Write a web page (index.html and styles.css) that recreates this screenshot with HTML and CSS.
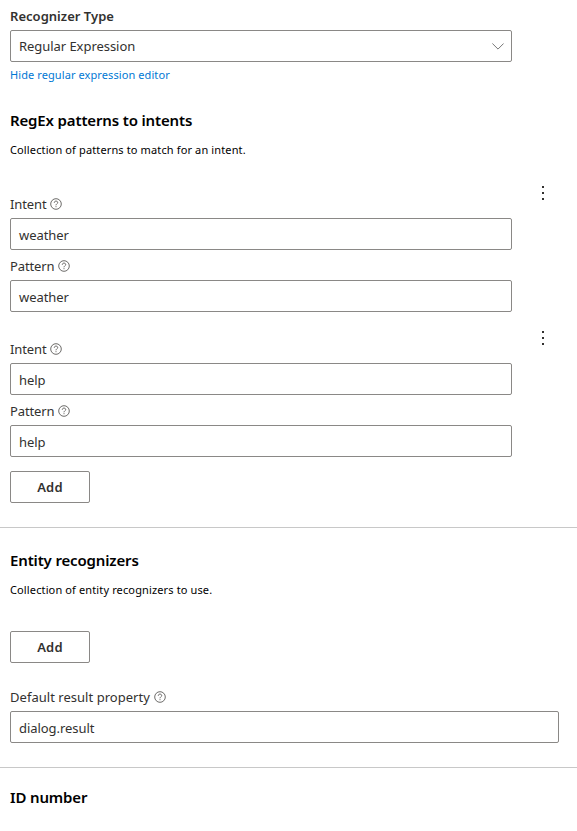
FILE: index.html
```html
<!DOCTYPE html>
<html lang="en">
<head>
<meta charset="utf-8">
<title>Recognizer properties</title>
<link rel="stylesheet" href="styles.css">
</head>
<body>
<svg class="defs" aria-hidden="true">
  <symbol id="help" viewBox="0 0 12 12"><circle cx="6" cy="6" r="5.3"/><path d="M4.3 4.8C4.3 3.7 5 3.1 6 3.1s1.7.6 1.7 1.5C7.7 5.8 6 5.9 6 7.3M6 8.2v1"/></symbol>
  <symbol id="more" viewBox="0 0 2 14"><path d="M0 0h2v2H0zM0 6h2v2H0zM0 12h2v2H0z"/></symbol>
</svg>
<section class="section recognizer">
  <div class="type-label">Recognizer Type</div>
  <div class="field select"><span>Regular Expression</span><svg class="chevron" viewBox="0 0 12 7"><path d="M.4.5 6 6.1 11.6.5"/></svg></div>
  <div class="link"><a>Hide regular expression editor</a></div>
  <h2>RegEx patterns to intents</h2>
  <p>Collection of patterns to match for an intent.</p>
  <div class="item">
    <div class="fields">
      <div class="label"><span>Intent</span><svg class="help"><use href="#help"/></svg></div>
      <div class="field">weather</div>
      <div class="label second"><span>Pattern</span><svg class="help"><use href="#help"/></svg></div>
      <div class="field">weather</div>
    </div>
    <svg class="more"><use href="#more"/></svg>
  </div>
  <div class="item">
    <div class="fields">
      <div class="label"><span>Intent</span><svg class="help"><use href="#help"/></svg></div>
      <div class="field">help</div>
      <div class="label second"><span>Pattern</span><svg class="help"><use href="#help"/></svg></div>
      <div class="field">help</div>
    </div>
    <svg class="more"><use href="#more"/></svg>
  </div>
  <button>Add</button>
</section>
<section class="section entities">
  <h2>Entity recognizers</h2>
  <p>Collection of entity recognizers to use.</p>
  <button>Add</button>
  <div class="label result"><span>Default result property</span><svg class="help"><use href="#help"/></svg></div>
  <div class="field wide">dialog.result</div>
</section>
<section class="section identity">
  <h2>ID number</h2>
</section>
</body>
</html>
```
FILE: styles.css
```css
* { box-sizing: border-box; }
body {
  margin: 0;
  height: 831px;
  overflow: hidden;
  background: #fff;
  color: #323130;
  font: 13px/20px "Noto Sans", "Open Sans", sans-serif;
}
.defs { display: none; }
.section { padding: 0 18px 24px 10px; white-space: nowrap; }
.section + .section { border-top: 1px solid #c8c8c8; padding-top: 20px; }
.section.identity { padding-top: 17px; }
.recognizer { padding-top: 6px; }
.type-label { height: 24px; font-weight: 600; letter-spacing: .03px; }
.field {
  display: flex;
  align-items: center;
  justify-content: space-between;
  width: 502px;
  height: 32px;
  padding: 2px 7px 0 8px;
  border: 1px solid #8a8886;
  border-radius: 2px;
  letter-spacing: -.05px;
}
.field.select { padding-top: 0; }
.field.wide { width: 549px; }
.chevron { width: 12px; height: 7px; fill: none; stroke: #777; }
.link { height: 26px; padding-top: 3px; font-size: 11px; letter-spacing: .09px; color: #0078d4; }
h2 {
  margin: 0;
  height: 24px;
  font-size: 15px;
  line-height: 24px;
  font-weight: 600;
  letter-spacing: -.15px;
  color: #000;
}
.recognizer h2 { margin-top: 20px; }
p { margin: 8px 0 0; height: 20px; font-size: 11px; letter-spacing: .13px; color: #000; }
.item { display: flex; justify-content: space-between; padding-right: 15px; }
p + .item { margin-top: 26px; }
.item + .item { margin-top: 19px; }
.fields { padding-top: 7px; }
.label { display: flex; align-items: center; height: 25px; padding-bottom: 3px; letter-spacing: -.12px; }
.label.second { height: 30px; padding-top: 5px; padding-bottom: 3px; }
.help { width: 12px; height: 12px; margin-left: 4px; fill: none; stroke: #484644; stroke-width: .8; }
.more { width: 2px; height: 14px; fill: #323130; }
button {
  display: block;
  width: 80px;
  height: 32px;
  margin: 14px 0 0;
  padding: 0;
  border: 1px solid #8a8886;
  border-radius: 2px;
  background: #fff;
  color: #323130;
  font: 600 13px/20px "Noto Sans", "Open Sans", sans-serif;
  letter-spacing: .2px;
}
.entities button { margin-top: 31px; }
.label.result { height: 48px; padding-top: 24px; padding-bottom: 4px; letter-spacing: .03px; }
```
